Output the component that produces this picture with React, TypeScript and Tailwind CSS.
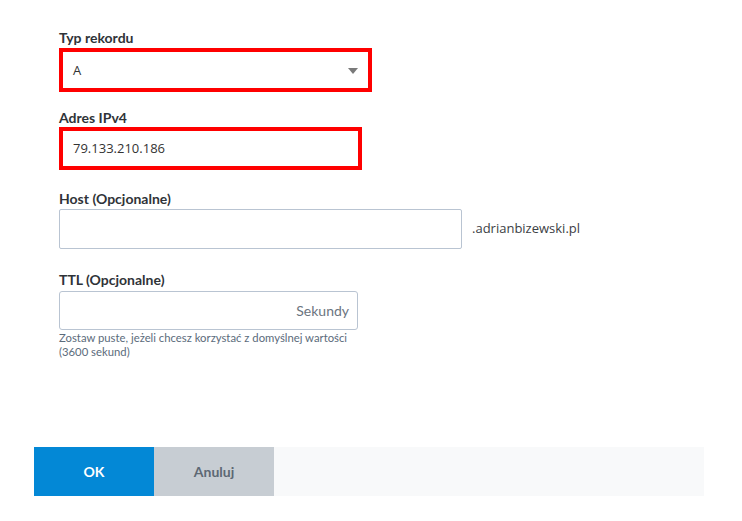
import React from "react";

export default function App() {
  return (
    <div className="w-[742px] h-[521px] bg-white relative overflow-hidden font-['Lato','Open_Sans',sans-serif]">
      <div className="pl-[59px] pt-[30px]">
        {/* Typ rekordu */}
        <div className="h-[16px] leading-[16px] text-[14px] font-bold text-[#2f3338]">Typ rekordu</div>
        <div className="mt-[2px] w-[313px] h-[44px] border-[4px] border-[#ff0000] bg-white flex items-center justify-between pl-[10px] pr-[10px]">
          <span className="font-['Open_Sans',sans-serif] text-[13px] text-[#333] leading-none">A</span>
          <svg width="10" height="6" viewBox="0 0 10 6" className="mt-[1px]">
            <path d="M0 0 L10 0 L5 6 Z" fill="#7a7a7a" />
          </svg>
        </div>

        {/* Adres IPv4 */}
        <div className="mt-[18px] h-[16px] leading-[16px] text-[14px] font-bold text-[#2f3338]">Adres IPv4</div>
        <div className="mt-[1px] w-[303px] h-[43px] border-[4px] border-[#ff0000] bg-white flex items-center pl-[10px]">
          <span className="font-['Open_Sans',sans-serif] text-[13px] text-[#333] leading-none">79.133.210.186</span>
        </div>

        {/* Host */}
        <div className="mt-[21px] h-[16px] leading-[16px] text-[14px] font-bold text-[#2f3338]">Host (Opcjonalne)</div>
        <div className="mt-[2px] flex items-center">
          <div className="w-[403px] h-[40px] border border-[#b9c4d2] rounded-[2px] bg-white" />
          <span className="ml-[10px] font-['Open_Sans',sans-serif] text-[13px] text-[#3c4044]">.adrianbizewski.pl</span>
        </div>

        {/* TTL */}
        <div className="mt-[23px] h-[16px] leading-[16px] text-[14px] font-bold text-[#2f3338]">TTL (Opcjonalne)</div>
        <div className="mt-[3px] w-[299px] h-[39px] border border-[#b9c4d2] rounded-[3px] bg-white flex items-center justify-end pr-[8px]">
          <span className="text-[14px] text-[#6b7480]">Sekundy</span>
        </div>
        <div className="mt-[1px] w-[300px] text-[11.3px] leading-[14px] text-[#5b6b7b]">
          Zostaw puste, jeżeli chcesz korzystać z domyślnej wartości (3600 sekund)
        </div>
      </div>

      {/* Buttons bar */}
      <div className="absolute left-[34px] top-[447px] w-[670px] h-[49px] flex bg-[#f8f9fa]">
        <div className="w-[120px] h-full bg-[#0388d6] flex items-center justify-center text-white font-bold text-[14px]">OK</div>
        <div className="w-[120px] h-full bg-[#c7cdd3] flex items-center justify-center text-[#5d6874] font-bold text-[14px]">Anuluj</div>
      </div>
    </div>
  );
}
